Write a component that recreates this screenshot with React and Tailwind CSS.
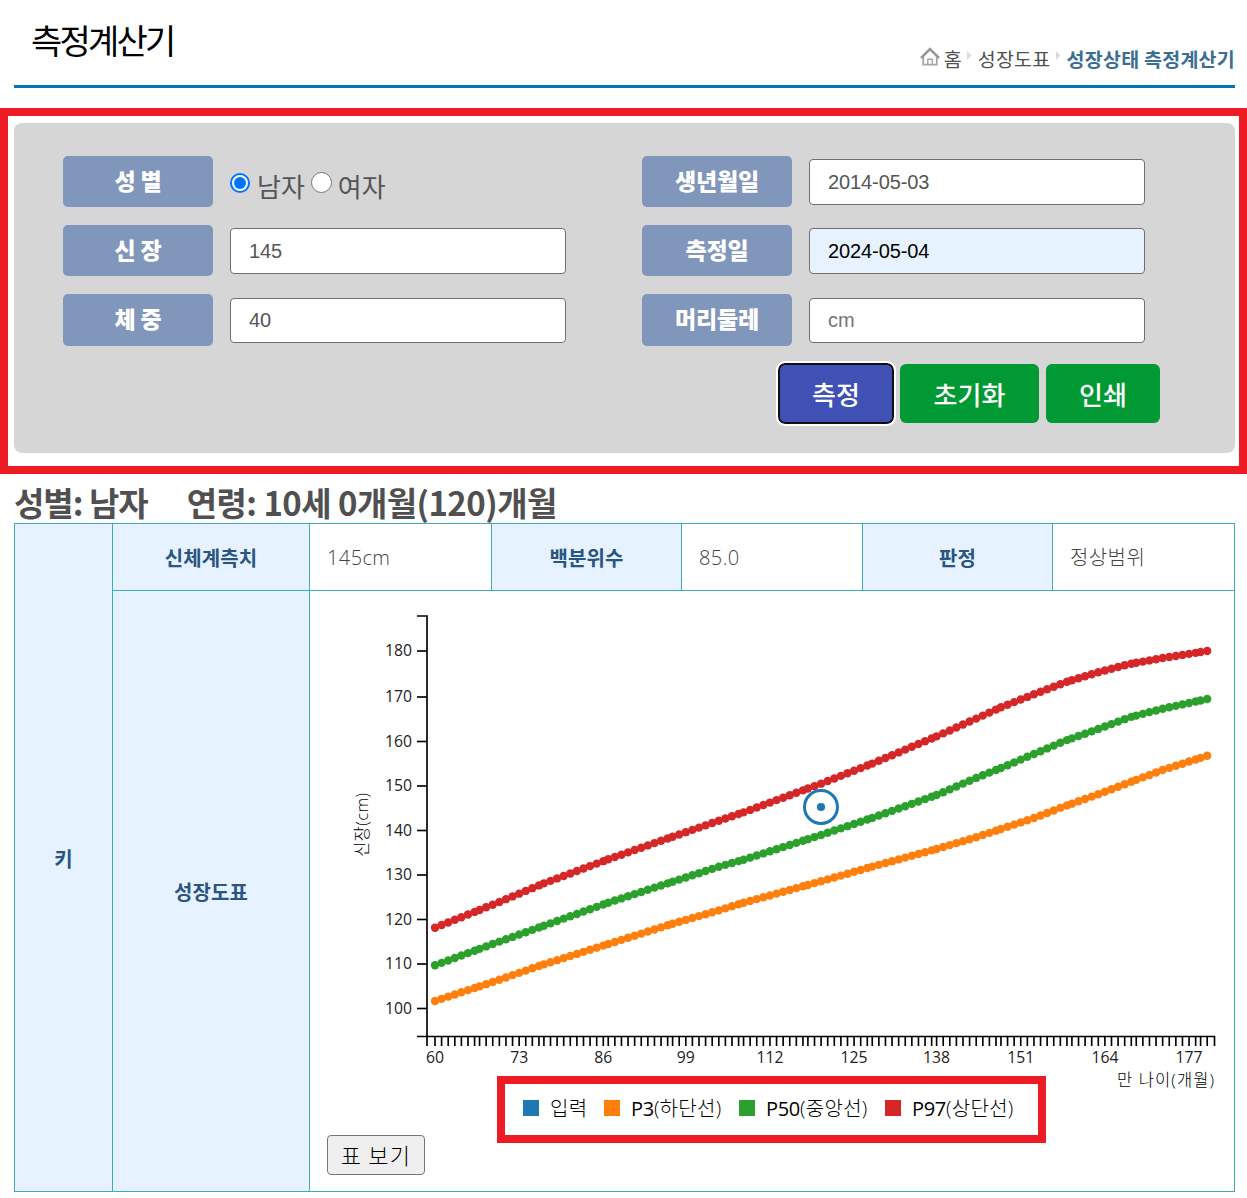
import React from "react";

const KR = 'font-["Noto_Sans_CJK_KR",sans-serif]';

const AXIS_X = 427;
const AXIS_Y = 1036.5;
const DOT = 1.65;

const KNOT_X = [435, 492.7, 544, 608.3, 672.7, 719, 743.7, 821, 872, 936.7, 976, 1001, 1034, 1065.3, 1098.3, 1129.7, 1162.7, 1207.4];

const SERIES = [
  { color: "#ff7f0e", y: [1001, 982, 964.3, 944, 923.7, 910.3, 902.7, 881.3, 866.7, 849, 837.3, 829, 818, 806, 794.3, 782.3, 770, 755.7] },
  { color: "#2ca02c", y: [965.3, 944, 925.7, 902.7, 881.7, 866.7, 859.7, 835, 818, 795, 778, 768, 754, 740.7, 729, 717.3, 708.7, 699] },
  { color: "#d62728", y: [927.7, 904.7, 883.3, 859.3, 836.7, 820.7, 812.3, 783.7, 763.7, 736.3, 718.7, 707.3, 694.3, 682.3, 672.3, 664, 658, 651] },
];

// One position per month, from 60 to 180
const MONTH_X = Array.from({ length: 121 }, (_, i) => 435 + DOT * Math.ceil(i * 3.902 - 0.38));

function valueAt(x, ys) {
  let k = 0;
  while (k < KNOT_X.length - 2 && x > KNOT_X[k + 1]) k++;
  const t = (x - KNOT_X[k]) / (KNOT_X[k + 1] - KNOT_X[k]);
  return ys[k] + t * (ys[k + 1] - ys[k]);
}

const Y_TICKS = [
  [180, 651], [170, 697], [160, 741.5], [150, 786], [140, 830.5], [130, 875], [120, 919.5], [110, 964], [100, 1008.5],
];
const X_LABELS = [60, 73, 86, 99, 112, 125, 138, 151, 164, 177];

function Chart() {
  return (
    <svg
      width="924"
      height="507"
      viewBox="310 591 924 507"
      className={'block shrink-0 font-["Open_Sans","Noto_Sans_CJK_KR",sans-serif]'}
    >
      <g stroke="#000" strokeWidth="1.65" fill="none">
        <path d={`M417 616H${AXIS_X}V${AXIS_Y}H417`} />
        <path d={`M${AXIS_X} 1046V${AXIS_Y}H1214.5V1046`} />
        {Y_TICKS.map(([v, y]) => (
          <path key={v} d={`M417 ${y}H${AXIS_X}`} />
        ))}
        {MONTH_X.map((x, i) => (
          <path key={i} d={`M${x} ${AXIS_Y}V1046`} />
        ))}
      </g>
      <g fontSize="16" fontWeight="400" fill="#222">
        {Y_TICKS.map(([v, y]) => (
          <text key={v} x="412" y={y + 5} textAnchor="end" textLength="27" lengthAdjust="spacingAndGlyphs">
            {v}
          </text>
        ))}
        {X_LABELS.map((v) => (
          <text
            key={v}
            x={MONTH_X[v - 60]}
            y="1063"
            textAnchor="middle"
            textLength={v > 99 ? 27 : 18}
            lengthAdjust="spacingAndGlyphs"
          >
            {v}
          </text>
        ))}
      </g>
      <g fontSize="16.5" fontWeight="300" fill="#000">
        <text x="1214" y="1086" textAnchor="end" textLength="97">
          만 나이(개월)
        </text>
        <text transform="translate(367.5 857) rotate(-90)" textLength="64">
          신장(cm)
        </text>
      </g>
      {SERIES.map((s) => (
        <g key={s.color} fill={s.color}>
          {MONTH_X.map((x, i) => (
            <circle key={i} cx={x} cy={valueAt(x, s.y)} r="4.2" />
          ))}
        </g>
      ))}
      <circle cx="821" cy="807" r="16.5" fill="none" stroke="#1f77b4" strokeWidth="3" />
      <circle cx="821" cy="807" r="4.1" fill="#1f77b4" />
    </svg>
  );
}

function Label({ children, tall }) {
  return (
    <div
      className={
        "flex w-[150px] shrink-0 items-center justify-center rounded-[5px] bg-[#8196bb] text-[23px] leading-none font-black tracking-[-0.2px] text-white " +
        (tall ? "h-[52px] pb-[4px]" : "h-[51px] pb-[2px]")
      }
    >
      {children}
    </div>
  );
}

function Field({ label, value, muted, filled, tall }) {
  return (
    <div className="flex items-center">
      <Label tall={tall}>{label}</Label>
      <div
        className={
          "ml-[17px] flex w-[336px] items-center rounded-[4px] border border-[#6f6f6f] pl-[18px] font-['Liberation_Sans',sans-serif] text-[20px] tracking-[-0.1px] " +
          (tall ? "h-[45px] " : "h-[46px] ") +
          (filled ? "bg-[#e6f2ff] text-black" : muted ? "bg-white text-[#757575]" : "bg-white text-[#555]")
        }
      >
        {value}
      </div>
    </div>
  );
}

function Arrow() {
  return (
    <svg width="5" height="9" viewBox="0 0 5 9" className="mb-[8px]">
      <path d="M0 0L4.5 4.5L0 9Z" fill="#dcdcdc" />
    </svg>
  );
}

function HomeIcon() {
  return (
    <svg width="20" height="20" viewBox="0 0 20 20" fill="none" className="mb-[5px]">
      <path d="M3.2 9V17.6H16.8V9" stroke="#a6a6a6" strokeWidth="1.8" />
      <path d="M1 11L10 2L19 11" stroke="#999" strokeWidth="2.6" />
      <path d="M7.8 17V12.3H12.2V17" stroke="#a6a6a6" strokeWidth="1.4" />
    </svg>
  );
}

function Head({ children, className = "" }) {
  return (
    <div className={"flex items-center justify-center bg-[#e6f2ff] pt-[2px] text-[20px] leading-none font-bold tracking-[0.1px] text-[#2a5580] " + className}>
      {children}
    </div>
  );
}

function Cell({ children }) {
  return (
    <div className={'flex items-center bg-white pt-px pl-[17px] font-["Open_Sans","Noto_Sans_CJK_KR",sans-serif] text-[20px] leading-none font-light tracking-[0.4px] text-[#444]'}>
      {children}
    </div>
  );
}

function Legend({ color, width, code, name }) {
  return (
    <div className="flex shrink-0 items-center gap-[11px]">
      <span className="size-4 shrink-0" style={{ backgroundColor: color }} />
      <span className="pt-[2px] leading-none font-light tracking-[0.3px] whitespace-nowrap" style={{ width }}>
        {code && <span className="font-normal tracking-[-0.3px]">{code}</span>}
        {name}
      </span>
    </div>
  );
}

export default function App() {
  return (
    <div className={"h-[1198px] w-[1247px] overflow-hidden bg-white text-[#505050] " + KR}>
      <header className="mx-[14px] flex h-[88px] w-[1221px] justify-between border-b-[3px] border-[#0077b3]">
        <h1 className="pt-[21px] pl-[17px] text-[34px] leading-[38px] tracking-[-2.8px] text-black">측정계산기</h1>
        <nav className="mt-[46px] flex h-[26px] items-center self-start text-[19.5px] leading-none">
          <HomeIcon />
          <span className="ml-[4px]">홈</span>
          <span className="ml-[5px]"><Arrow /></span>
          <span className="ml-[6px] tracking-[0.3px]">성장도표</span>
          <span className="ml-[5px]"><Arrow /></span>
          <span className="ml-[6px] font-bold tracking-[0.25px] text-[#3c6e93]">성장상태 측정계산기</span>
        </nav>
      </header>

      <section className="mt-[20px] h-[366px] w-[1247px] border-8 border-[#ed1c24] pt-[7px] pl-[6px]">
        <div className="h-[330px] w-[1221px] rounded-[8px] bg-[#d6d6d6] pt-[33px] pl-[49px]">
          <div className="flex gap-[76px]">
            <div className="flex flex-col gap-[18px]">
              <div className="flex items-center">
                <Label>성 별</Label>
                <div className="flex items-center pt-[8px] pl-[17px] text-[26px] leading-none text-[#555]">
                  <span className="mb-[6px] flex size-[20px] items-center justify-center rounded-full border-2 border-[#0075ff] bg-white">
                    <span className="size-3 rounded-full bg-[#0075ff]" />
                  </span>
                  <span className="ml-[7px]">남자</span>
                  <span className="mb-[6px] ml-[6px] size-[21px] rounded-full border border-[#767676] bg-white" />
                  <span className="ml-[6px]">여자</span>
                </div>
              </div>
              <Field label="신 장" value="145" />
              <Field label="체 중" value="40" tall />
            </div>
            <div className="flex flex-col gap-[18px]">
              <Field label="생년월일" value="2014-05-03" />
              <Field label="측정일" value="2024-05-04" filled />
              <Field label="머리둘레" value="cm" muted tall />
            </div>
          </div>
          <div className="mt-[17px] flex items-center pl-[715px] text-[26px] leading-none font-medium text-white">
            <button className="h-[61px] w-[116px] rounded-[7px] border-2 border-[#101010] bg-[#3f51b5] outline-2 outline-white">측정</button>
            <button className="ml-[6px] h-[59px] w-[139px] rounded-[6px] bg-[#009933]">초기화</button>
            <button className="ml-[7px] h-[59px] w-[114px] rounded-[6px] bg-[#009933]">인쇄</button>
          </div>
        </div>
      </section>

      <main className="ml-[14px] w-[1221px]">
        <h2 className="flex h-[49px] items-center gap-[39px] pt-[7px] text-[33px] leading-none font-bold whitespace-nowrap">
          <span className="tracking-[-1px]">성별: 남자</span>
          <span className="tracking-[-0.55px]">연령: 10세 0개월(120)개월</span>
        </h2>
        <div className="grid grid-cols-[97px_196px_181px_189px_180px_189px_181px] grid-rows-[66px_600px] gap-px bg-[#3eabb8] p-px">
          <Head className="row-span-2">키</Head>
          <Head>신체계측치</Head>
          <Cell>145cm</Cell>
          <Head>백분위수</Head>
          <Cell>85.0</Cell>
          <Head>판정</Head>
          <Cell>정상범위</Cell>
          <Head>성장도표</Head>
          <div className="col-span-5 flex flex-col items-start bg-white">
            <Chart />
            <div className={'relative -mt-[22px] ml-[187px] flex h-[67px] w-[549px] items-center gap-[15px] border-8 border-[#ed1c24] pl-[18px] pb-[3px] font-["Open_Sans","Noto_Sans_CJK_KR",sans-serif] text-[20px] text-black'}>
              <Legend color="#1f77b4" width={39} name="입력" />
              <Legend color="#ff7f0e" width={93} code="P3" name="(하단선)" />
              <Legend color="#2ca02c" width={104} code="P50" name="(중앙선)" />
              <Legend color="#d62728" width={104} code="P97" name="(상단선)" />
            </div>
            <button className="-mt-[8px] ml-[17px] h-[40px] w-[98px] rounded-[4px] border border-[#767676] bg-[#efefef] pb-[3px] text-[22px] leading-none font-light tracking-[1.2px] text-black">
              표 보기
            </button>
          </div>
        </div>
      </main>
    </div>
  );
}
